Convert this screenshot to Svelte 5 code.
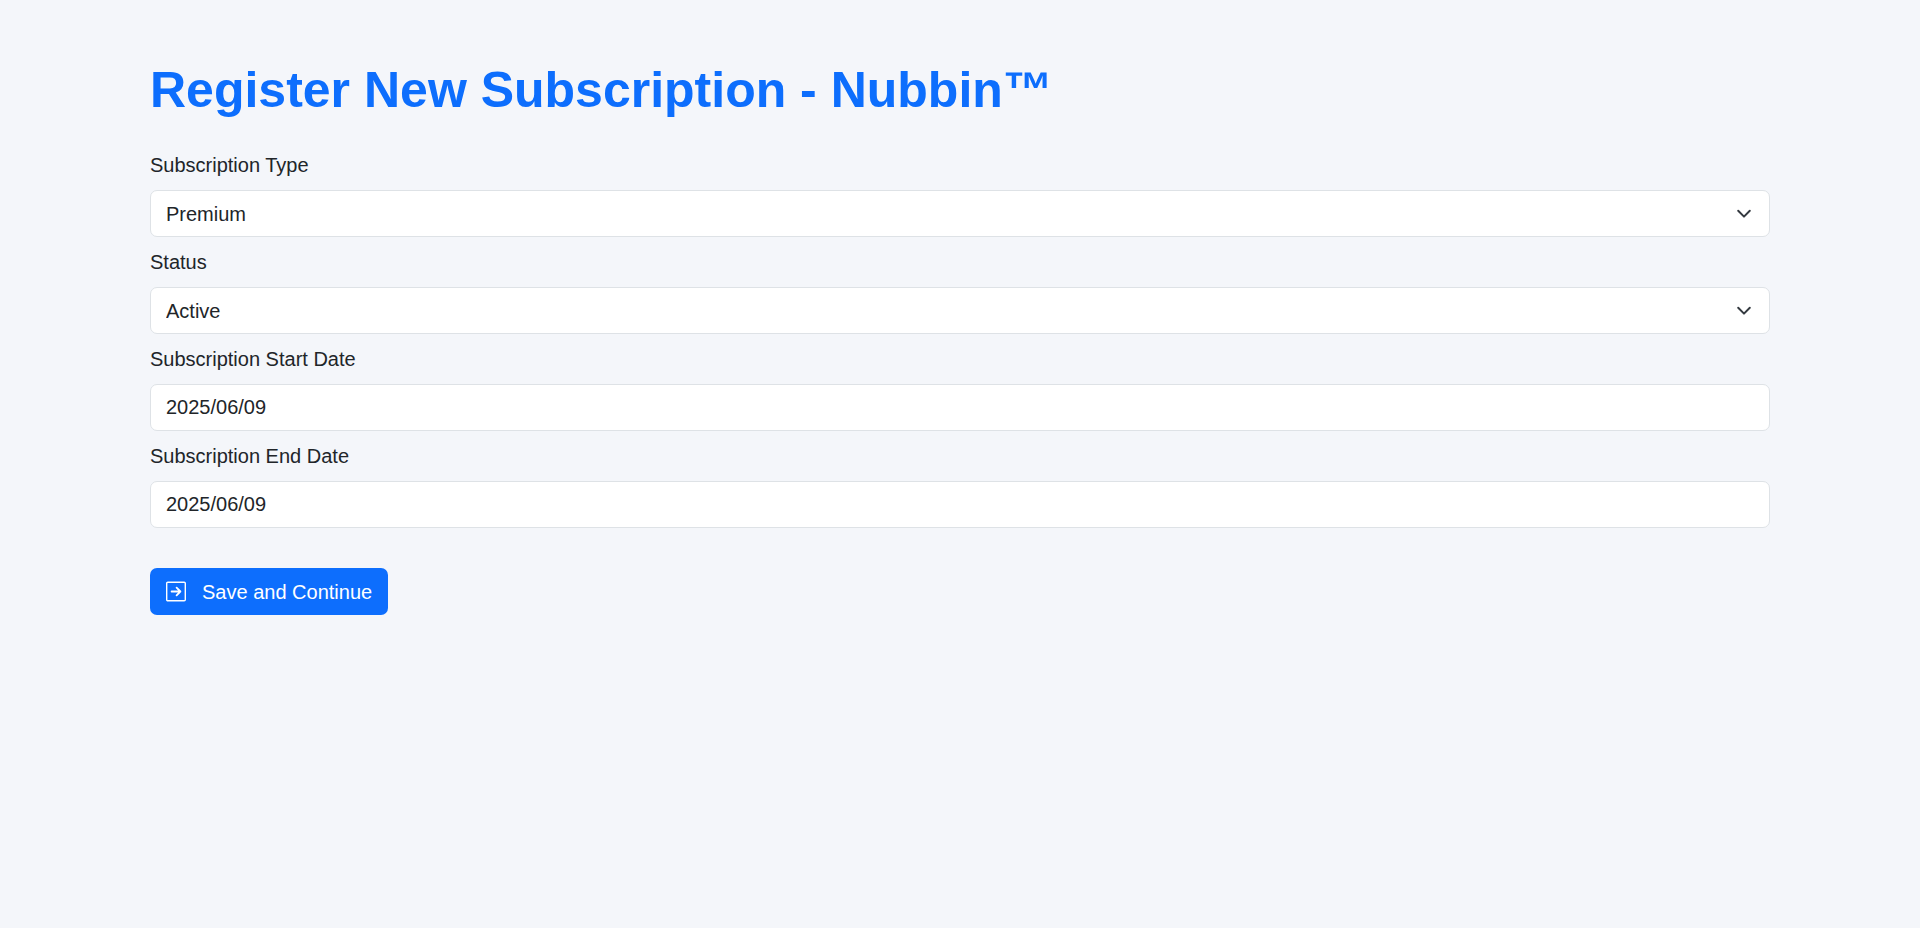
<script>
  let type = $state('Premium');
  let status = $state('Active');
  let start = $state('2025/06/09');
  let end = $state('2025/06/09');
</script>

<main>
  <h1>Register New Subscription - Nubbin™</h1>
  <form onsubmit={(e) => e.preventDefault()}>
    <div class="field">
      <label for="type">Subscription Type</label>
      <div class="select">
        <select id="type" bind:value={type}><option>Premium</option></select>
        <svg viewBox="0 0 16 16" aria-hidden="true"><path d="m2.2 4.800 5.800 5.800 5.800-5.800" /></svg>
      </div>
    </div>
    <div class="field">
      <label for="status">Status</label>
      <div class="select">
        <select id="status" bind:value={status}><option>Active</option></select>
        <svg viewBox="0 0 16 16" aria-hidden="true"><path d="m2.2 4.800 5.800 5.800 5.800-5.800" /></svg>
      </div>
    </div>
    <div class="field">
      <label for="start">Subscription Start Date</label>
      <input id="start" type="text" bind:value={start} />
    </div>
    <div class="field">
      <label for="end">Subscription End Date</label>
      <input id="end" type="text" bind:value={end} />
    </div>
    <button type="submit">
      <svg viewBox="0 0 20 20" aria-hidden="true">
        <rect x="0.7" y="0.2" width="18.6" height="18.600" rx="1.1" />
        <path class="arrow" d="M5.600 9.500h8.800M10.600 5.700l3.800 3.800-3.800 3.800" />
      </svg>
      <span>Save and Continue</span>
    </button>
  </form>
</main>

<style>
  :global(body) {
    background: #f4f6fa;
  }
  main {
    box-sizing: border-box;
    padding: 60px 150px;
    color: #212529;
    font: 20px/30px "Liberation Sans", Arial, sans-serif;
  }
  h1 {
    margin: 0 0 30px;
    color: #0d6efd;
    font-size: 50px;
    font-weight: 700;
    line-height: 60px;
  }
  .field {
    display: flex;
    flex-direction: column;
    gap: 10px;
    margin-bottom: 10px;
  }
  label {
    line-height: 30px;
  }
  .select {
    display: grid;
    align-items: center;
  }
  .select > * {
    grid-area: 1 / 1;
  }
  .select svg {
    justify-self: end;
    width: 16px;
    height: 16px;
    margin-right: 18px;
    fill: none;
    stroke: #343a40;
    stroke-width: 2;
    stroke-linecap: round;
    stroke-linejoin: round;
    pointer-events: none;
  }
  input,
  select {
    box-sizing: border-box;
    width: 100%;
    height: 47px;
    margin: 0;
    padding: 0 15px;
    border: 1px solid #dee2e6;
    border-radius: 7px;
    background: #fff;
    color: #212529;
    font: inherit;
    appearance: none;
  }
  button {
    display: inline-flex;
    align-items: center;
    gap: 16px;
    height: 47px;
    margin: 30px 0 0;
    padding: 0 16px;
    border: 0;
    border-radius: 7px;
    background: #0d6efd;
    color: #fff;
    font: inherit;
    cursor: pointer;
  }
  button svg {
    width: 20px;
    height: 20px;
    overflow: visible;
    fill: none;
    stroke: currentColor;
    stroke-width: 1.4;
    stroke-linecap: round;
    stroke-linejoin: round;
  }
  button .arrow {
    stroke-width: 1.8;
  }
</style>
